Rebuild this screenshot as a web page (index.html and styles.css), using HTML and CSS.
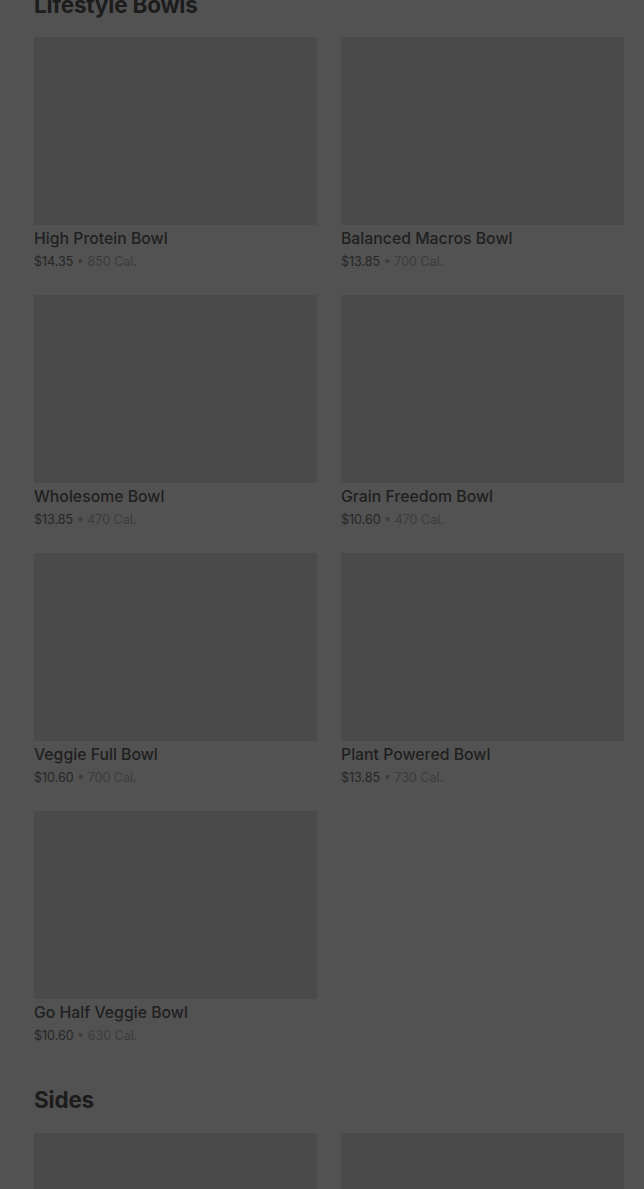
FILE: index.html
```html
<!DOCTYPE html>
<html lang="en">
<head>
    <meta charset="UTF-8">
    <meta name="viewport" content="width=device-width, initial-scale=1.0">
    <title>Menu</title>
    <link rel="stylesheet" href="styles.css">
</head>
<body>
    <div class="menu">
        <section class="category first">
            <h2>Lifestyle Bowls</h2>
            <div class="grid">
                <div class="item">
                    <div class="thumb"></div>
                    <div class="name">High Protein Bowl</div>
                    <div class="meta"><span class="price">$14.35</span> • 850 Cal.</div>
                </div>
                <div class="item">
                    <div class="thumb"></div>
                    <div class="name">Balanced Macros Bowl</div>
                    <div class="meta"><span class="price">$13.85</span> • 700 Cal.</div>
                </div>
                <div class="item">
                    <div class="thumb"></div>
                    <div class="name">Wholesome Bowl</div>
                    <div class="meta"><span class="price">$13.85</span> • 470 Cal.</div>
                </div>
                <div class="item">
                    <div class="thumb"></div>
                    <div class="name">Grain Freedom Bowl</div>
                    <div class="meta"><span class="price">$10.60</span> • 470 Cal.</div>
                </div>
                <div class="item">
                    <div class="thumb"></div>
                    <div class="name">Veggie Full Bowl</div>
                    <div class="meta"><span class="price">$10.60</span> • 700 Cal.</div>
                </div>
                <div class="item">
                    <div class="thumb"></div>
                    <div class="name">Plant Powered Bowl</div>
                    <div class="meta"><span class="price">$13.85</span> • 730 Cal.</div>
                </div>
                <div class="item">
                    <div class="thumb"></div>
                    <div class="name">Go Half Veggie Bowl</div>
                    <div class="meta"><span class="price">$10.60</span> • 630 Cal.</div>
                </div>
            </div>
        </section>
        <section class="category">
            <h2>Sides</h2>
            <div class="grid">
                <div class="item">
                    <div class="thumb"></div>
                </div>
                <div class="item">
                    <div class="thumb"></div>
                </div>
            </div>
        </section>
    </div>
</body>
</html>
```

FILE: styles.css
```css
body, html {
    margin: 0;
    padding: 0;
    background-color: #525252;
    font-family: Inter, "Noto Sans", sans-serif;
    overflow: hidden;
}
.menu {
    padding: 0 20px 0 34px;
}
.category h2 {
    margin: 0;
    font-size: 22.5px;
    line-height: 28px;
    font-weight: 700;
    color: #1c1c1c;
    letter-spacing: -0.2px;
}
.category.first h2 {
    margin-top: -9px;
}
.category {
    margin-bottom: 41px;
}
.category .grid {
    margin-top: 18px;
    display: grid;
    grid-template-columns: 1fr 1fr;
    column-gap: 24px;
    row-gap: 24px;
}
.category + .category .grid {
    margin-top: 19px;
}
.thumb {
    height: 188px;
    background-color: #4a4a4a;
}
.name {
    margin-top: 4px;
    font-size: 15.8px;
    line-height: 20px;
    font-weight: 500;
    color: #1f1f1f;
}
.meta {
    margin-top: 4px;
    font-size: 12.5px;
    line-height: 18px;
    color: #3c3c3c;
}
.price {
    color: #262626;
}
```
